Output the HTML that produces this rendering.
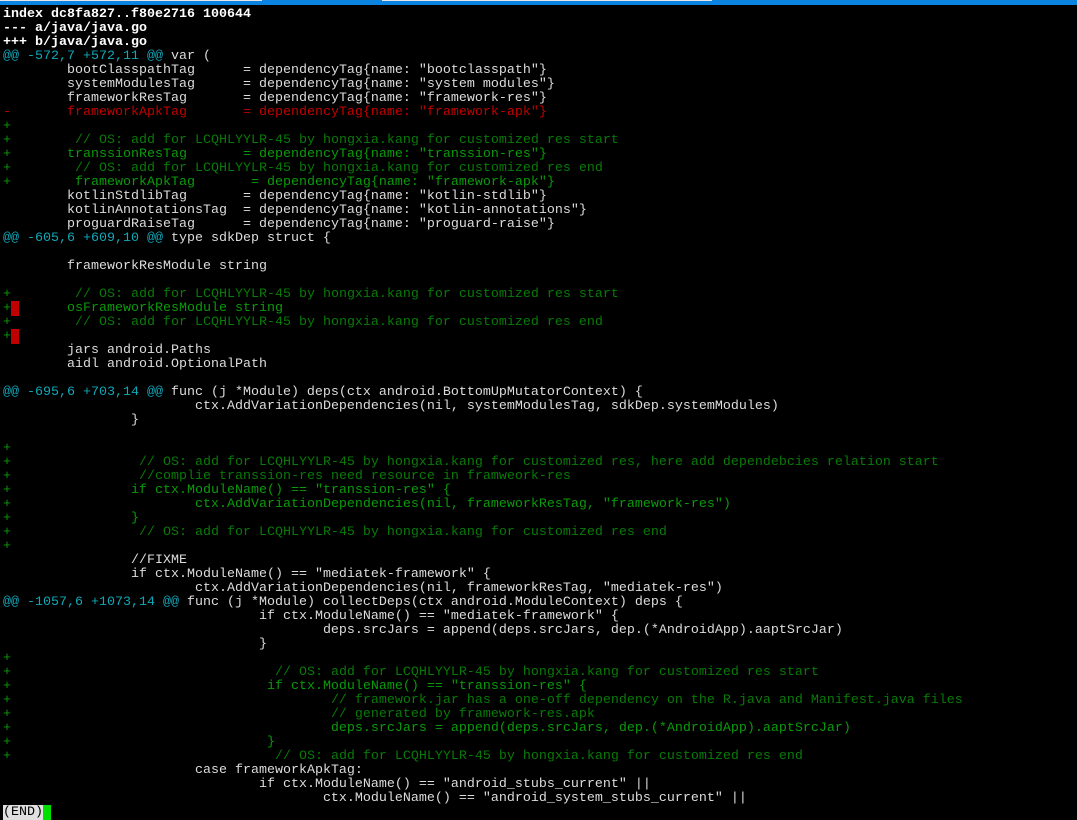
<!DOCTYPE html>
<html><head><meta charset="utf-8"><style>
html,body{margin:0;padding:0;background:#000;width:1077px;height:819px;overflow:hidden}
#top{position:absolute;left:0;top:0;width:1077px;height:5px;background:#0a84e0}
#top1{position:absolute;left:0;top:0;width:262px;height:1px;background:#e6e6e6}
#top2{position:absolute;left:382px;top:0;width:330px;height:1px;background:#e6e6e6}
pre{position:absolute;left:3px;top:8px;margin:0;font-family:"Liberation Mono",monospace;font-size:13.33px;line-height:14px;color:#dcdcdc;tab-size:8;-moz-tab-size:8;white-space:pre}
.b{font-weight:bold;color:#fff}
.c{color:#10a8b8}
.r{color:#c00000}
.g{color:#0a9a0a}
.cm{color:#087a08}
.rb{background:#c00000;color:#c00000}
.end{background:#e0e0e0;color:#000}
.cur{background:#00e000;color:#00e000}
</style></head><body>
<div id="top"></div><div id="top1"></div><div id="top2"></div>
<pre><span class="b">index dc8fa827..f80e2716 100644</span>
<span class="b">--- a/java/java.go</span>
<span class="b">+++ b/java/java.go</span>
<span class="c">@@ -572,7 +572,11 @@</span> var (
	bootClasspathTag      = dependencyTag{name: "bootclasspath"}
	systemModulesTag      = dependencyTag{name: "system modules"}
	frameworkResTag       = dependencyTag{name: "framework-res"}
<span class="r">-	frameworkApkTag       = dependencyTag{name: "framework-apk"}</span>
<span class="g">+</span>
<span class="g">+	 <span class="cm">// OS: add for LCQHLYYLR-45 by hongxia.kang for customized res start</span></span>
<span class="g">+	transsionResTag       = dependencyTag{name: "transsion-res"}</span>
<span class="g">+	 <span class="cm">// OS: add for LCQHLYYLR-45 by hongxia.kang for customized res end</span></span>
<span class="g">+	 frameworkApkTag       = dependencyTag{name: "framework-apk"}</span>
	kotlinStdlibTag       = dependencyTag{name: "kotlin-stdlib"}
	kotlinAnnotationsTag  = dependencyTag{name: "kotlin-annotations"}
	proguardRaiseTag      = dependencyTag{name: "proguard-raise"}
<span class="c">@@ -605,6 +609,10 @@</span> type sdkDep struct {

	frameworkResModule string

<span class="g">+	 <span class="cm">// OS: add for LCQHLYYLR-45 by hongxia.kang for customized res start</span></span>
<span class="g">+<span class="rb">x</span>      osFrameworkResModule string</span>
<span class="g">+	 <span class="cm">// OS: add for LCQHLYYLR-45 by hongxia.kang for customized res end</span></span>
<span class="g">+<span class="rb">x</span></span>
	jars android.Paths
	aidl android.OptionalPath

<span class="c">@@ -695,6 +703,14 @@</span> func (j *Module) deps(ctx android.BottomUpMutatorContext) {
			ctx.AddVariationDependencies(nil, systemModulesTag, sdkDep.systemModules)
		}

<span class="g">+</span>
<span class="g">+		 <span class="cm">// OS: add for LCQHLYYLR-45 by hongxia.kang for customized res, here add dependebcies relation start</span></span>
<span class="g">+		 <span class="cm">//complie transsion-res need resource in framweork-res</span></span>
<span class="g">+		if ctx.ModuleName() == "transsion-res" {</span>
<span class="g">+			ctx.AddVariationDependencies(nil, frameworkResTag, "framework-res")</span>
<span class="g">+		}</span>
<span class="g">+		 <span class="cm">// OS: add for LCQHLYYLR-45 by hongxia.kang for customized res end</span></span>
<span class="g">+</span>
		//FIXME
		if ctx.ModuleName() == "mediatek-framework" {
			ctx.AddVariationDependencies(nil, frameworkResTag, "mediatek-res")
<span class="c">@@ -1057,6 +1073,14 @@</span> func (j *Module) collectDeps(ctx android.ModuleContext) deps {
				if ctx.ModuleName() == "mediatek-framework" {
					deps.srcJars = append(deps.srcJars, dep.(*AndroidApp).aaptSrcJar)
				}
<span class="g">+</span>
<span class="g">+				  <span class="cm">// OS: add for LCQHLYYLR-45 by hongxia.kang for customized res start</span></span>
<span class="g">+				 if ctx.ModuleName() == "transsion-res" {</span>
<span class="g">+					 <span class="cm">// framework.jar has a one-off dependency on the R.java and Manifest.java files</span></span>
<span class="g">+					 <span class="cm">// generated by framework-res.apk</span></span>
<span class="g">+					 deps.srcJars = append(deps.srcJars, dep.(*AndroidApp).aaptSrcJar)</span>
<span class="g">+				 }</span>
<span class="g">+				  <span class="cm">// OS: add for LCQHLYYLR-45 by hongxia.kang for customized res end</span></span>
			case frameworkApkTag:
				if ctx.ModuleName() == "android_stubs_current" ||
					ctx.ModuleName() == "android_system_stubs_current" ||
<span class="end">(END)</span><span class="cur">x</span></pre>
</body></html>
